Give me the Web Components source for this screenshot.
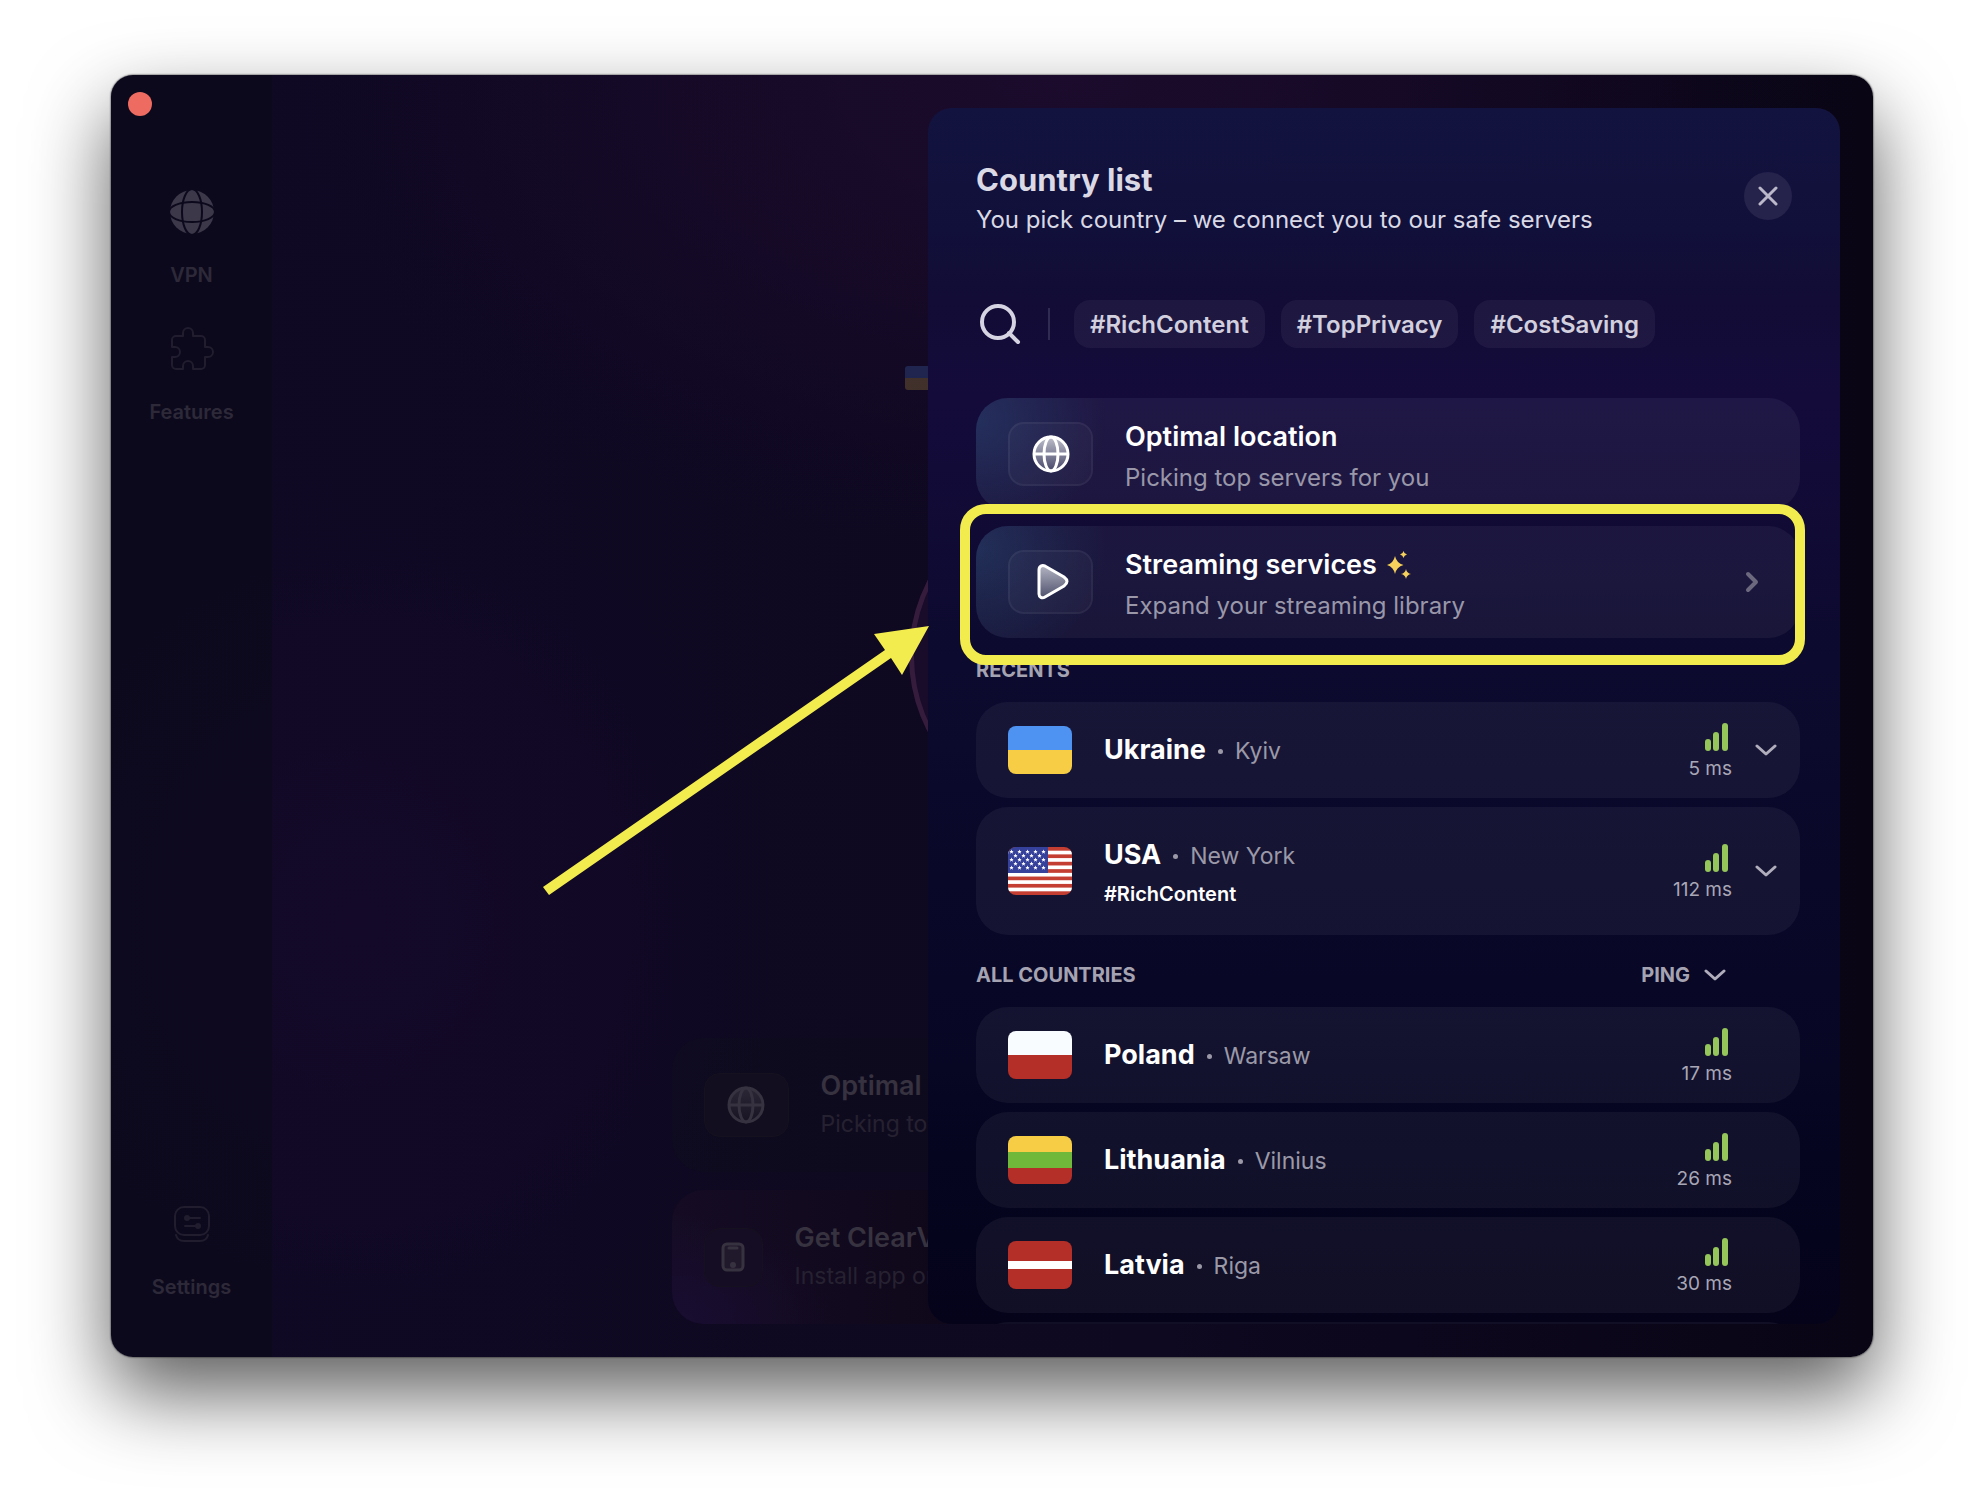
<!DOCTYPE html>
<html lang="en">
<head>
<meta charset="utf-8">
<meta name="viewport" content="width=device-width, initial-scale=1">
<title>Country list</title>
<style>
    html, body { margin: 0; background: #fff; }
    body {
        box-sizing: border-box;
        height: 100vh;
        display: flex;
        padding: 75px 111px 147px;
        font-family: Inter, "Open Sans", "Liberation Sans", sans-serif;
        color: #fff;
    }
</style>
</head>
<body>
<vpn-window>
    <side-nav slot="nav">
        <nav-item icon="globe-solid" active>VPN</nav-item>
        <nav-item icon="puzzle">Features</nav-item>
        <nav-item slot="bottom" icon="sliders">Settings</nav-item>
    </side-nav>

    <home-view slot="main">
        <promo-card icon="globe">
            <span slot="title">Optimal location</span>
            <span slot="text">Picking top servers for you</span>
        </promo-card>
        <promo-card icon="phone" tinted>
            <span slot="title">Get ClearVPN</span>
            <span slot="text">Install app on</span>
        </promo-card>
    </home-view>

    <country-panel slot="panel">
        <span slot="title">Country list</span>
        <span slot="subtitle">You pick country – we connect you to our safe servers</span>
        <tag-chip slot="tags">#RichContent</tag-chip>
        <tag-chip slot="tags">#TopPrivacy</tag-chip>
        <tag-chip slot="tags">#CostSaving</tag-chip>

        <service-card slot="services" icon="globe">
            <span slot="title">Optimal location</span>
            <span slot="text">Picking top servers for you</span>
        </service-card>
        <service-card slot="services" icon="play" sparkle arrow marked>
            <span slot="title">Streaming services</span>
            <span slot="text">Expand your streaming library</span>
        </service-card>

        <country-row slot="recents" flag="ua" name="Ukraine" city="Kyiv" ping="5" expandable></country-row>
        <country-row slot="recents" flag="us" name="USA" city="New York" ping="112" tag="#RichContent" expandable></country-row>

        <country-row slot="countries" flag="pl" name="Poland" city="Warsaw" ping="17"></country-row>
        <country-row slot="countries" flag="lt" name="Lithuania" city="Vilnius" ping="26"></country-row>
        <country-row slot="countries" flag="lv" name="Latvia" city="Riga" ping="30"></country-row>
        <country-row slot="countries"></country-row>
    </country-panel>

    <pointer-arrow slot="overlay"></pointer-arrow>
</vpn-window>

<script>
const ICONS = {
    'globe-solid': `<svg width="44" height="44" viewBox="0 0 44 44">
        <circle cx="22" cy="22" r="22" fill="currentColor"/>
        <g fill="none" stroke="#0d091c" stroke-width="2">
            <ellipse cx="22" cy="22" rx="10" ry="23"/><ellipse cx="22" cy="22" rx="23" ry="10"/>
        </g></svg>`,
    puzzle: `<svg width="44" height="44" viewBox="0 0 44 44" fill="none" stroke="currentColor" stroke-width="2" stroke-linejoin="round">
        <path d="M2 20v-7a4 4 0 0 1 4-4h7V6a5 5 0 0 1 10 0v3h8a4 4 0 0 1 4 4v7h3a5 5 0 0 1 0 10h-3v8a4 4 0 0 1-4 4h-8v-3a5 5 0 0 0-10 0v3H6a4 4 0 0 1-4-4v-8h3a5 5 0 0 0 0-10z"/></svg>`,
    sliders: `<svg width="44" height="44" viewBox="0 0 44 44" fill="none" stroke="currentColor" stroke-width="2" stroke-linecap="round">
        <rect x="5" y="5" width="34" height="28" rx="9"/>
        <path d="M6 33c1 4 4 6 8 6h16c4 0 7-2 8-6M17 16h13M15 24h13"/>
        <circle cx="17" cy="16" r="2" fill="currentColor"/><circle cx="28" cy="24" r="2" fill="currentColor"/></svg>`,
    globe: `<svg width="38" height="38" viewBox="0 0 38 38" fill="none" stroke="currentColor" stroke-width="3">
        <defs><linearGradient id="g" x2="0" y2="1"><stop stop-color="currentColor" stop-opacity=".7"/><stop offset="1" stop-color="currentColor" stop-opacity=".15"/></linearGradient></defs>
        <circle cx="19" cy="19" r="17" fill="url(#g)"/><ellipse cx="19" cy="19" rx="7" ry="17"/><path d="M2 19h34"/></svg>`,
    play: `<svg width="38" height="38" viewBox="0 0 38 38">
        <defs><linearGradient id="p" x2="0" y2="1"><stop stop-color="#fff" stop-opacity=".65"/><stop offset="1" stop-color="#fff" stop-opacity=".2"/></linearGradient></defs>
        <path d="M7 7c0-4 3-5 6-4l19 11c4 3 4 6 0 9L13 34c-3 2-6 0-6-3z" fill="url(#p)" stroke="#fff" stroke-width="3"/></svg>`,
    phone: `<svg width="24" height="30" viewBox="0 0 24 30">
        <rect x="2" y="2" width="20" height="26" rx="4" fill="currentColor" fill-opacity=".35" stroke="currentColor" stroke-width="3"/>
        <path d="M8 6h8" stroke="currentColor" stroke-width="3" stroke-linecap="round"/><circle cx="12" cy="23" r="3" fill="currentColor"/></svg>`,
    search: `<svg width="44" height="44" viewBox="0 0 44 44" fill="none" stroke="#d6d3e2" stroke-width="4" stroke-linecap="round">
        <circle cx="20" cy="20" r="16"/><path d="M31 31l9 9"/></svg>`,
    close: `<svg width="20" height="20" viewBox="0 0 20 20" fill="none" stroke="#bab8c9" stroke-width="3" stroke-linecap="round"><path d="M2 2l16 16M18 2L2 18"/></svg>`,
    down: `<svg width="22" height="12" viewBox="0 0 22 12" fill="none" stroke="#b0aebc" stroke-width="3" stroke-linecap="round" stroke-linejoin="round"><path d="M2 2l9 8 9-8"/></svg>`,
    right: `<svg width="14" height="22" viewBox="0 0 14 22" fill="none" stroke="#6c687e" stroke-width="4" stroke-linecap="round" stroke-linejoin="round"><path d="M3 3l8 8-8 8"/></svg>`,
    sparkle: `<svg width="26" height="28" viewBox="0 0 26 28" fill="#f6d15c">
        <path d="M8 5q1.500 7 8.500 9-7 2-8.500 9Q6.500 16 0 14 6.500 12 8 5zM16.500 0q.6 3 3.500 3.500-2.900.5-3.500 3.500-.6-3-3.500-3.500 2.900-.5 3.500-3.500zM19 18q.8 4.200 5 5-4.200.8-5 5-.8-4.200-5-5 4.200-.8 5-5z"/></svg>`,
    signal: `<svg width="24" height="28" viewBox="0 0 24 28" fill="#94c65a">
        <rect x="0" y="16" width="6" height="12" rx="3"/><rect x="8" y="9" width="6" height="19" rx="3"/><rect x="17" y="0" width="6" height="28" rx="3"/></svg>`
};

function starsAndStripes() {
    let out = '<rect width="64" height="48" fill="#c43e31"/>';
    for (let i = 1; i < 13; i += 2) {
        out += `<rect y="${i * 48 / 13}" width="64" height="${48 / 13}" fill="#fff"/>`;
    }
    out += '<rect width="40" height="26" fill="#35419b"/>';
    for (let row = 0; row < 5; row++) {
        const odd = row % 2;
        for (let col = 0; col < 5 - odd; col++) {
            const x = 3.5 + col * 8 + odd * 4;
            const y = 4.7 + row * 4;
            out += `<path transform="translate(${x} ${y})" fill="#fff" d="M0-2.200L.6-.7 2.100-.7 1 .4 1.400 2 0 1.100-1.400 2-1 .4-2.100-.7-.6-.7z"/>`;
        }
    }
    return out;
}

function bands(...list) {
    let y = 0;
    return list.map(([height, color]) => {
        const rect = `<rect y="${y}" width="64" height="${height}" fill="${color}"/>`;
        y += height;
        return rect;
    }).join('');
}

const FLAGS = {
    ua: bands([24, '#4f93f2'], [24, '#f6cd45']),
    us: starsAndStripes(),
    pl: bands([24, '#f8fcff'], [24, '#b32f27']),
    lt: bands([16, '#f6cd45'], [16, '#70b83a'], [16, '#b32f27']),
    lv: bands([20, '#b32f27'], [8, '#fff'], [20, '#b32f27'])
};

const RESET = `
    *, :host { box-sizing: border-box; }
    svg { display: block; flex: none; }
    button { font: inherit; color: inherit; background: none; border: 0; margin: 0; padding: 0; cursor: pointer; }
`;

class BaseElement extends HTMLElement {
    constructor() {
        super();
        this.attachShadow({ mode: 'open' });
    }

    connectedCallback() {
        this.shadowRoot.innerHTML = `<style>${RESET}${this.styles()}</style>${this.markup()}`;
    }
}

customElements.define('vpn-window', class extends BaseElement {
    styles() {
        return `
            :host {
                position: relative;
                flex: 1;
                min-width: 0;
                display: grid;
                grid-template-columns: 161px 1fr;
                grid-template-rows: minmax(0, 1fr);
                border-radius: 22px;
                background:
                    radial-gradient(ellipse 780px 480px at 54% 0, #1c0b2c, transparent),
                    radial-gradient(ellipse 420px 460px at 14% 66%, #140929, transparent),
                    linear-gradient(90deg, #0f0924, #0e0820 60%, #090515);
                box-shadow: 0 0 2px #000, 0 36px 80px rgba(0, 0, 0, .64);
            }
            .light {
                position: absolute;
                top: 17px;
                left: 17px;
                width: 24px;
                height: 24px;
                border-radius: 50%;
                background: #ed6b60;
            }
            slot[name=nav], slot[name=main], slot[name=panel] { display: contents; }
            ::slotted([slot=panel]) { grid-area: 1 / 2; justify-self: end; }
            ::slotted([slot=main]) { grid-area: 1 / 2; }
        `;
    }

    markup() {
        return `
            <slot name="nav"></slot>
            <slot name="main"></slot>
            <slot name="panel"></slot>
            <slot name="overlay"></slot>
            <button class="light" aria-label="Close window"></button>
        `;
    }
});

customElements.define('side-nav', class extends BaseElement {
    styles() {
        return `
            :host {
                border-radius: 22px 0 0 22px;
                background: rgba(10, 9, 22, .5);
            }
            nav {
                height: 100%;
                display: flex;
                flex-direction: column;
                gap: 40px;
                padding: 115px 0 58px;
            }
            .bottom { margin-top: auto; }
        `;
    }

    markup() {
        return `<nav><slot></slot><div class="bottom"><slot name="bottom"></slot></div></nav>`;
    }
});

customElements.define('nav-item', class extends BaseElement {
    styles() {
        return `
            :host { display: block; color: #211d2e; }
            :host([active]) { color: #3c384a; }
            a {
                display: flex;
                flex-direction: column;
                align-items: center;
                gap: 29px;
                color: inherit;
                text-decoration: none;
            }
            span { font-size: 20px; line-height: 24px; font-weight: 600; color: #2d2939; }
        `;
    }

    markup() {
        return `<a href="#">${ICONS[this.getAttribute('icon')]}<span><slot></slot></span></a>`;
    }
});

customElements.define('home-view', class extends BaseElement {
    styles() {
        return `
            :host {
                display: flex;
                flex-direction: column;
                align-items: center;
                padding: 291px 0 33px;
                min-width: 0;
            }
            .status { width: 336px; display: flex; flex-direction: column; gap: 102px; }
            .flag { border-radius: 3px; opacity: .2; }
            .ring {
                width: 328px;
                height: 328px;
                align-self: center;
                border: 5px solid #351c3d;
                border-radius: 50%;
                background: #190b2a;
            }
            .cards {
                width: 802px;
                margin-top: auto;
                display: flex;
                flex-direction: column;
                gap: 18px;
            }
        `;
    }

    markup() {
        return `
            <div class="status">
                <svg class="flag" width="32" height="24" viewBox="0 0 64 48">${FLAGS.ua}</svg>
                <div class="ring"></div>
            </div>
            <div class="cards"><slot></slot></div>
        `;
    }
});

customElements.define('promo-card', class extends BaseElement {
    styles() {
        return `
            :host {
                display: flex;
                align-items: center;
                gap: 32px;
                height: 134px;
                padding: 0 32px;
                border-radius: 32px;
                color: #37323f;
                background: rgba(16, 14, 28, .4);
            }
            :host([tinted]) {
                background:
                    radial-gradient(ellipse 160px 110px at 0 100%, #190d31, transparent),
                    linear-gradient(90deg, #150c24, #0e0718 40%);
            }
            .icon {
                display: grid;
                place-items: center;
                width: 85px;
                height: 64px;
                border: 1px solid #15111f;
                border-radius: 16px;
                background: #120e1f;
            }
            :host([tinted]) .icon { width: 59px; height: 59px; background: #150d23; }
            .title { font-size: 27px; line-height: 38px; font-weight: 600; }
            .text { font-size: 23px; line-height: 38px; color: #262131; }
        `;
    }

    markup() {
        return `
            <div class="icon">${ICONS[this.getAttribute('icon')]}</div>
            <div>
                <div class="title"><slot name="title"></slot></div>
                <div class="text"><slot name="text"></slot></div>
            </div>
        `;
    }
});

customElements.define('country-panel', class extends BaseElement {
    styles() {
        return `
            :host {
                position: relative;
                display: block;
                width: 912px;
                max-width: 100%;
                margin: 33px;
                padding: 54px 40px 0 48px;
                border-radius: 24px;
                overflow: hidden;
                background: linear-gradient(#131340, #11103a 10%, #120c36 16%, #140b3b 24%, #0c0a2e 46%, #080726 72%, #04031a);
            }
            header { display: flex; justify-content: space-between; align-items: flex-start; padding-right: 8px; }
            h1 { margin: 0 0 4px; font-size: 31px; line-height: 36px; font-weight: 700; color: #dad9e5; }
            p { margin: 0; font-size: 24px; line-height: 36px; color: #d9d9e6; }
            .close {
                display: grid;
                place-items: center;
                width: 48px;
                height: 48px;
                margin-top: 10px;
                border-radius: 50%;
                background: #25234c;
            }
            .filters { display: flex; align-items: center; margin-top: 62px; padding-left: 2px; }
            .filters hr { width: 2px; height: 32px; margin: 0 24px 0 26px; border: 0; background: #302b50; }
            .tags { display: flex; gap: 16px; }
            .services { display: flex; flex-direction: column; gap: 16px; margin: 50px 0 20px; }
            .rows { display: flex; flex-direction: column; gap: 9px; }
            .rows + .label { margin-top: 28px; }
            .label {
                display: flex;
                justify-content: space-between;
                margin-bottom: 20px;
                padding-right: 74px;
                font-size: 20px;
                line-height: 24px;
                color: #a5a3b2;
            }
            h2 { margin: 0; font-size: 20px; line-height: 24px; font-weight: 700; }
            .sort { display: flex; align-items: center; gap: 14px; font-weight: 700; }
        `;
    }

    markup() {
        return `
            <header>
                <div>
                    <h1><slot name="title"></slot></h1>
                    <p><slot name="subtitle"></slot></p>
                </div>
                <button class="close" aria-label="Close">${ICONS.close}</button>
            </header>
            <div class="filters">
                <button class="search" aria-label="Search">${ICONS.search}</button>
                <hr>
                <div class="tags"><slot name="tags"></slot></div>
            </div>
            <div class="services"><slot name="services"></slot></div>
            <div class="label"><h2>RECENTS</h2></div>
            <div class="rows"><slot name="recents"></slot></div>
            <div class="label">
                <h2>ALL COUNTRIES</h2>
                <button class="sort">PING ${ICONS.down}</button>
            </div>
            <div class="rows"><slot name="countries"></slot></div>
        `;
    }
});

customElements.define('tag-chip', class extends BaseElement {
    styles() {
        return `
            :host { display: block; }
            button {
                height: 48px;
                padding: 0 16px;
                border-radius: 16px;
                background: rgba(255, 255, 255, .05);
                font-size: 24px;
                font-weight: 600;
                color: #d2cfdf;
                white-space: nowrap;
            }
        `;
    }

    markup() {
        return `<button><slot></slot></button>`;
    }
});

customElements.define('service-card', class extends BaseElement {
    styles() {
        return `
            :host { position: relative; display: block; }
            :host([marked])::after {
                content: "";
                position: absolute;
                z-index: 1;
                inset: -22px -5px -27px -16px;
                border: 10px solid #f2ec4e;
                border-radius: 26px;
                pointer-events: none;
            }
            button {
                width: 100%;
                height: 112px;
                display: flex;
                align-items: center;
                gap: 32px;
                padding: 0 41px 0 32px;
                border-radius: 32px;
                text-align: left;
                background:
                    radial-gradient(ellipse 130px 120px at 0 20%, rgba(50, 105, 150, .3), transparent),
                    rgba(255, 255, 255, .05);
            }
            .icon {
                display: grid;
                place-items: center;
                width: 85px;
                height: 64px;
                border: 2px solid rgba(255, 255, 255, .05);
                border-radius: 16px;
                background: rgba(255, 255, 255, .03);
            }
            .body { flex: 1; padding-top: 6px; }
            .title {
                display: flex;
                align-items: center;
                gap: 10px;
                font-size: 27px;
                line-height: 42px;
                font-weight: 600;
            }
            .text { font-size: 24px; line-height: 40px; color: #9997a9; }
        `;
    }

    markup() {
        return `
            <button>
                <span class="icon">${ICONS[this.getAttribute('icon')]}</span>
                <div class="body">
                    <div class="title"><slot name="title"></slot>${this.hasAttribute('sparkle') ? ICONS.sparkle : ''}</div>
                    <div class="text"><slot name="text"></slot></div>
                </div>
                ${this.hasAttribute('arrow') ? ICONS.right : ''}
            </button>
        `;
    }
});

customElements.define('country-row', class extends BaseElement {
    styles() {
        return `
            :host {
                display: flex;
                align-items: center;
                min-height: 96px;
                padding: 0 23px 0 32px;
                border-radius: 32px;
                background: rgba(255, 255, 255, .05);
            }
            :host([tag]) { min-height: 128px; }
            :host([tag]) .info { padding-top: 6px; }
            .flag { border-radius: 8px; }
            .info { flex: 1; display: flex; flex-direction: column; gap: 2px; margin-left: 32px; }
            .place { display: flex; align-items: baseline; font-size: 23px; line-height: 36px; color: #9b99a8; }
            .name { font-size: 27px; font-weight: 700; color: #fff; }
            .dot { align-self: center; width: 5px; height: 5px; margin: 2px 12px 0; border-radius: 50%; background: #9b99a8; }
            .tag { font-size: 20px; line-height: 36px; font-weight: 600; }
            .ping { display: flex; flex-direction: column; align-items: flex-end; gap: 6px; padding-top: 3px; margin-right: 23px; }
            .ping svg { margin-right: 3px; }
            .ping span { font-size: 19px; line-height: 24px; color: #a9a7b6; }
            .spacer { width: 22px; }
        `;
    }

    markup() {
        if (!this.hasAttribute('name')) return '';
        const tag = this.getAttribute('tag');
        return `
            <svg class="flag" width="64" height="48" viewBox="0 0 64 48">${FLAGS[this.getAttribute('flag')]}</svg>
            <div class="info">
                <div class="place">
                    <span class="name">${this.getAttribute('name')}</span>
                    <span class="dot"></span>
                    <span>${this.getAttribute('city')}</span>
                </div>
                ${tag ? `<div class="tag">${tag}</div>` : ''}
            </div>
            <div class="ping">${ICONS.signal}<span>${this.getAttribute('ping')} ms</span></div>
            ${this.hasAttribute('expandable') ? `<button aria-label="Show cities">${ICONS.down}</button>` : '<div class="spacer"></div>'}
        `;
    }
});

// Callout arrow that points at the marked service card
customElements.define('pointer-arrow', class extends BaseElement {
    styles() {
        return `
            :host { position: absolute; left: 432px; top: 551px; pointer-events: none; }
        `;
    }

    markup() {
        return `
            <svg width="388" height="272" viewBox="0 0 388 272" fill="#f2ec4e">
                <path d="M0 261L342 24 331 8 386 0 359 49 348 32 6 269z"/>
            </svg>
        `;
    }
});
</script>
</body>
</html>
